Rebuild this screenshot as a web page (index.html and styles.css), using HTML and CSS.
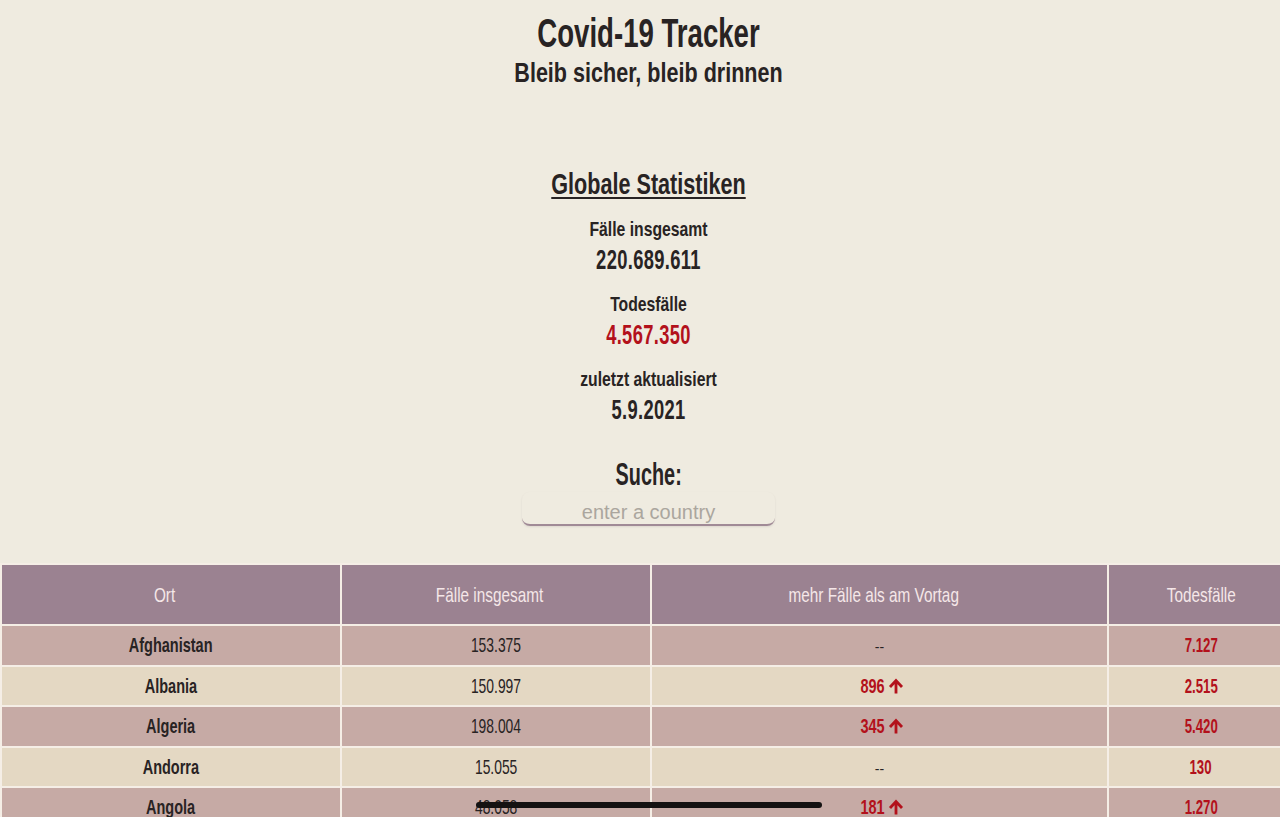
FILE: index.html
```html
<!DOCTYPE html>
<html lang="de">
<head>
<meta charset="utf-8">
<title>Covid-19 Tracker</title>
<link rel="stylesheet" href="styles.css">
</head>
<body>
<div class="page">
<header class="masthead">
  <h1 class="title">Covid-19 Tracker</h1>
  <p class="subtitle">Bleib sicher, bleib drinnen</p>
</header>
<main>
  <section class="stats">
    <h2 class="stats-title">Globale Statistiken</h2>
    <div class="stat">
      <p class="stat-label">Fälle insgesamt</p>
      <p class="stat-value">220.689.611</p>
    </div>
    <div class="stat">
      <p class="stat-label">Todesfälle</p>
      <p class="stat-value red">4.567.350</p>
    </div>
    <div class="stat">
      <p class="stat-label">zuletzt aktualisiert</p>
      <p class="stat-value">5.9.2021</p>
    </div>
  </section>
  <section class="search">
    <label class="search-label" for="country">Suche:</label>
    <input id="country" class="search-input" type="text" placeholder="enter a country">
  </section>
  <table class="cases">
    <colgroup>
      <col class="c-ort"><col class="c-total"><col class="c-new"><col class="c-deaths">
    </colgroup>
    <thead>
      <tr><th><span>Ort</span></th><th><span>Fälle insgesamt</span></th><th><span>mehr Fälle als am Vortag</span></th><th><span>Todesfälle</span></th></tr>
    </thead>
    <tbody>
      <tr><td class="place"><span>Afghanistan</span></td><td class="num"><span>153.375</span></td><td class="none"><span>--</span></td><td class="death"><span>7.127</span></td></tr>
      <tr><td class="place"><span>Albania</span></td><td class="num"><span>150.997</span></td><td class="up"><span>896</span><svg class="arrow" viewBox="0 0 16 16" width="16" height="16"><path d="M8 15.5V3M2 9l6-6.5L14 9" fill="none" stroke="currentColor" stroke-width="2.8"/></svg></td><td class="death"><span>2.515</span></td></tr>
      <tr><td class="place"><span>Algeria</span></td><td class="num"><span>198.004</span></td><td class="up"><span>345</span><svg class="arrow" viewBox="0 0 16 16" width="16" height="16"><path d="M8 15.5V3M2 9l6-6.5L14 9" fill="none" stroke="currentColor" stroke-width="2.8"/></svg></td><td class="death"><span>5.420</span></td></tr>
      <tr><td class="place"><span>Andorra</span></td><td class="num"><span>15.055</span></td><td class="none"><span>--</span></td><td class="death"><span>130</span></td></tr>
      <tr><td class="place"><span>Angola</span></td><td class="num"><span>48.058</span></td><td class="up"><span>181</span><svg class="arrow" viewBox="0 0 16 16" width="16" height="16"><path d="M8 15.5V3M2 9l6-6.5L14 9" fill="none" stroke="currentColor" stroke-width="2.8"/></svg></td><td class="death"><span>1.270</span></td></tr>
    </tbody>
  </table>
</main>
</div>
<div class="home-indicator"></div>
</body>
</html>
```
FILE: styles.css
```css
html, body {
  margin: 0;
  padding: 0;
  background: #efebe0;
  overflow-x: hidden;
}
body {
  font-family: "Liberation Sans", Arial, sans-serif;
  color: #282323;
  text-align: center;
}
::-webkit-scrollbar { display: none; }

.page {
  width: 1297px;
}

.title, .subtitle, .stats-title, .stat-label, .stat-value, .search-label {
  margin: 0;
  font-weight: 700;
}

.title {
  margin-top: 10px;
  font-size: 40px;
  line-height: 46px;
  transform: scaleX(0.69);
}
.subtitle {
  font-size: 28px;
  line-height: 34px;
  transform: scaleX(0.77);
}

.stats {
  margin-top: 76px;
}
.stats-title {
  font-size: 30px;
  line-height: 36px;
  text-decoration: underline;
  text-decoration-thickness: 2px;
  text-underline-offset: 3px;
  transform: scaleX(0.72);
}
.stat-label {
  font-size: 21px;
  line-height: 24px;
  margin-top: 15px;
  transform: scaleX(0.75);
}
.stat + .stat .stat-label {
  margin-top: 17px;
}
.stat-value {
  font-size: 27px;
  line-height: 30px;
  margin-top: 4px;
  letter-spacing: 0.5px;
  transform: scaleX(0.68);
}
.stat-value.red {
  color: #b3111b;
}

.search {
  margin-top: 33px;
  display: flex;
  flex-direction: column;
  align-items: center;
}
.search-label {
  display: block;
  font-size: 31px;
  line-height: 34px;
  transform: scaleX(0.64);
}
.search-input {
  box-sizing: border-box;
  width: 253px;
  height: 34px;
  margin: 0;
  padding: 9px 0 0;
  border: none;
  border-bottom: 2px solid #a08a96;
  border-radius: 8px;
  background: transparent;
  box-shadow: 0 1px 2px rgba(90, 70, 80, 0.12);
  font-family: "Liberation Sans", Arial, sans-serif;
  font-size: 20px;
  line-height: 22px;
  text-align: center;
  color: #333;
  outline: none;
}
.search-input::placeholder {
  color: #aba69e;
}

.cases {
  margin-top: 37px;
  width: 1297px;
  table-layout: fixed;
  border-collapse: collapse;
}
.c-ort { width: 340px; }
.c-total { width: 310px; }
.c-new { width: 457px; }
.c-deaths { width: 190px; }

.cases th, .cases td {
  border: 2px solid #f5eee6;
  padding: 0;
  vertical-align: middle;
  text-align: center;
  white-space: nowrap;
}
.cases th > span, .cases td > span {
  display: inline-block;
}
.cases thead tr {
  height: 61px;
}
.cases th {
  background: #9b8291;
  color: #f5e7e8;
  font-weight: 400;
  font-size: 21px;
}
.cases th:not(:last-child) {
  padding-right: 12px;
}
.cases th:last-child {
  padding-right: 4px;
}
.cases th > span {
  transform: scaleX(0.73);
}
.cases tbody tr {
  height: 40.5px;
}
.cases tbody tr:nth-child(odd) td {
  background: #c6aaa5;
}
.cases tbody tr:nth-child(even) td {
  background: #e4d8c3;
}
.cases td {
  font-size: 21px;
}
.place {
  font-weight: 700;
}
.place > span {
  transform: scaleX(0.69);
}
.num > span {
  transform: scaleX(0.66);
}
.none > span {
  font-size: 14px;
}
.up, .death {
  color: #b3111b;
  font-weight: 700;
}
.death {
  padding-right: 4px !important;
}
.death > span {
  transform: scaleX(0.63);
}
.up > span {
  transform: scaleX(0.69);
  margin-right: -3px;
}
.arrow {
  vertical-align: -1px;
}

.home-indicator {
  position: fixed;
  left: 476px;
  bottom: 9px;
  width: 346px;
  height: 6px;
  border-radius: 3px;
  background: #141212;
}
```
